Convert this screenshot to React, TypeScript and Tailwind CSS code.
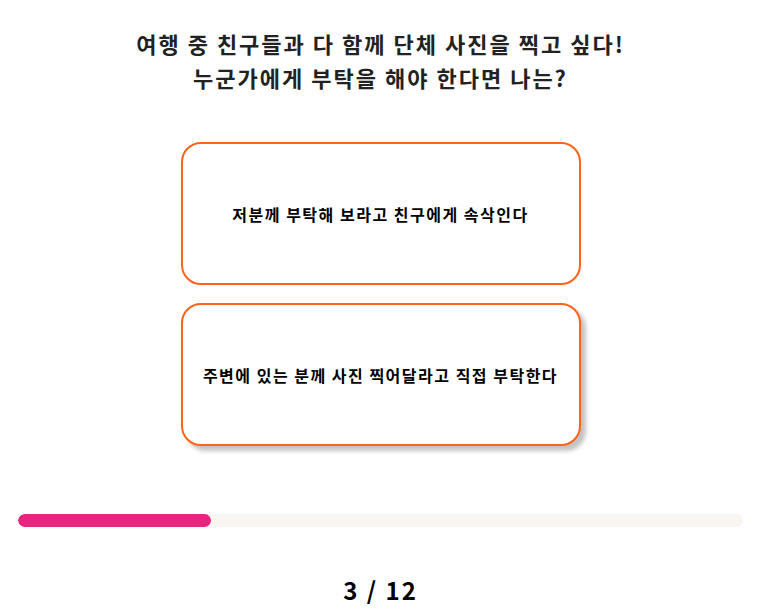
import React from "react";

const font = { fontFamily: '"Noto Sans CJK KR", "Noto Sans", sans-serif' };

const answers = [
  { text: "저분께 부탁해 보라고 친구에게 속삭인다", hover: false },
  { text: "주변에 있는 분께 사진 찍어달라고 직접 부탁한다", hover: true },
];

export default function App() {
  const current = 3;
  const total = 12;

  return (
    <div className="w-[761px] h-[610px] bg-white flex flex-col items-center" style={font}>
      <h1 className="mt-[26px] text-center text-[22px] leading-[34px] font-bold tracking-[2px] text-[#222]">
        여행 중 친구들과 다 함께 단체 사진을 찍고 싶다!
        <br />
        누군가에게 부탁을 해야 한다면 나는?
      </h1>

      <div className="mt-[48px] flex flex-col gap-[18px]">
        {answers.map((a) => (
          <button
            key={a.text}
            className={`w-[400px] h-[143px] rounded-[20px] border-2 border-[#ff6319] bg-white flex items-center justify-center text-[16px] font-bold tracking-[1.5px] text-black ${
              a.hover ? "shadow-[5px_5px_4px_#c4c4c4]" : ""
            }`}
          >
            {a.text}
          </button>
        ))}
      </div>

      <div className="mt-[68px] w-[725px] h-[13px] rounded-full bg-[#f9f6f2] overflow-hidden">
        <div className="h-full rounded-full bg-[#e8267f] w-[193px]" />
      </div>

      <div className="mt-[45px] text-[24px] font-bold tracking-[2px] text-black">
        {current} / {total}
      </div>
    </div>
  );
}
